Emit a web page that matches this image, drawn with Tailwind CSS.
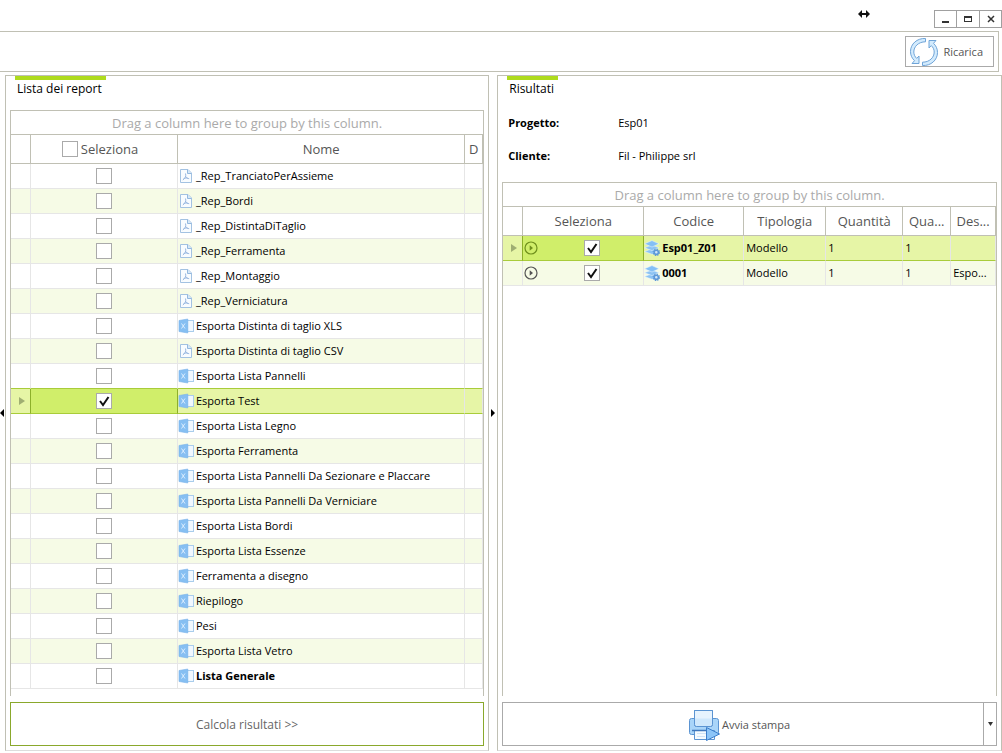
<!DOCTYPE html>
<html lang="it">
<head>
<meta charset="utf-8">
<title>Lista dei report</title>
<script src="https://cdn.jsdelivr.net/npm/@tailwindcss/browser@4"></script>
</head>
<body class="flex h-screen flex-col overflow-hidden bg-white font-['Open_Sans','Noto_Sans',sans-serif] text-[11px] leading-4 text-black">

<svg class="hidden" aria-hidden="true">
  <symbol id="pdf" viewBox="0 0 16 16">
    <path d="M2.500 1.500h7.500l3.500 3.500v9.500h-11z" fill="#f8fcff" stroke="#a3c2e2"/>
    <path d="M9.500 1.500v4h4" fill="#d5e8fa" stroke="#93b9df"/>
    <path d="M7.500 5.500c.7 2.500 0 4.500-2.700 6.500M7.800 8.500c.7 1.500 1.700 2 3.400 2.200M5.500 10.800c1.400-.7 2.800-.9 4.300-.6" fill="none" stroke="#8fb0dc" stroke-width=".9"/>
  </symbol>
  <symbol id="xls" viewBox="0 0 16 16">
    <rect x="9" y="2.500" width="6.500" height="11" fill="#f1f8ff" stroke="#a9cdec"/>
    <path d="M1 2.500 9.800 1v14L1 13.500z" fill="#86bff2" stroke="#78b2ea" stroke-width=".6"/>
    <path d="m3.500 5.500 3.500 5M7 5.500l-3.500 5" stroke="#dceeff" stroke-width="1"/>
  </symbol>
  <symbol id="layers" viewBox="0 0 16 16">
    <path d="M.5 11.500 8 8.800l7 2.700L8 14.300z" fill="#8cc3f3" stroke="#eef8ff" stroke-width=".5"/>
    <path d="M.5 7.800 8 5l7 2.800-7 2.800z" fill="#8cc3f3" stroke="#eef8ff" stroke-width=".5"/>
    <path d="M.5 3.800 8 .6l7 3.200-7 3.200z" fill="#84c0f5" stroke="#eef8ff" stroke-width=".5"/>
    <circle cx="12.300" cy="12.300" r="2.100" fill="#cfe6fb" stroke="#5c98d8" stroke-width="1.600"/>
    <circle cx="12.300" cy="12.300" r="3.200" fill="none" stroke="#5c98d8" stroke-width="1.100" stroke-dasharray="1.400 1.110"/>
  </symbol>
  <symbol id="play" viewBox="0 0 14 14">
    <circle cx="7" cy="7" r="6" fill="none" stroke="currentColor" stroke-width="1.200"/>
    <path d="M5.700 4.200v5.600L9 7z" fill="currentColor"/>
  </symbol>
</svg>

<header class="flex h-[31px] shrink-0 items-start justify-end">
  <svg class="mt-[9px] mr-16 h-2.5 w-3" viewBox="0 0 12 10" aria-hidden="true"><path d="M0 5l4-4v3h4V1l4 4-4 4V6H4v3z" fill="#111"/></svg>
  <div class="mt-[10px] flex border border-[#a0a0a0] text-[#333]">
    <button aria-label="Riduci" class="grid h-4 w-[22px] place-items-center border-r border-[#a0a0a0]"><svg class="size-3" viewBox="0 0 12 12"><path d="M2 8h7v2H2z" fill="currentColor"/></svg></button>
    <button aria-label="Ingrandisci" class="grid h-4 w-[23px] place-items-center border-r border-[#a0a0a0]"><svg class="size-3" viewBox="0 0 12 12"><path d="M2 3h8v6H2zM3 5v3h6V5z" fill="currentColor" fill-rule="evenodd"/></svg></button>
    <button aria-label="Chiudi" class="grid h-4 w-[21px] place-items-center"><svg class="size-3" viewBox="0 0 12 12"><path d="m3 3 6 6M9 3 3 9" stroke="currentColor" stroke-width="1.500"/></svg></button>
  </div>
</header>

<div class="mr-[3px] flex h-[41px] shrink-0 items-center justify-end border border-l-0 border-[#c0c0b4] pr-1">
  <button class="flex h-[31px] items-center gap-1 border border-[#aaa] pr-2.5 pl-[3px] text-[11px] text-[#555]">
    <svg class="size-[30px]" viewBox="0 0 30 30" fill="#d3ebfd" stroke="#6fa4d8" aria-hidden="true">
      <path d="M16.500 1.500C8 1 1.500 7 1.500 14.500c0 3.800 1.500 6.800 4 9.200L3 26.500h7V19l-2.300 2.400C5.900 19.700 4.800 17.500 4.800 15c0-5.500 4.700-10.200 11.700-10.200z"/>
      <path d="M13.500 28.500c8.500.5 15-5.500 15-13 0-3.800-1.500-6.800-4-9.200L27 3.500h-7V11l2.300-2.400c1.800 1.700 2.900 3.900 2.900 6.400 0 5.500-4.700 10.200-11.700 10.200z"/>
    </svg>
    Ricarica
  </button>
</div>

<main class="mt-[3px] mb-0.5 flex min-h-0 flex-1">
  <div class="grid w-[5px] shrink-0 items-center"><svg class="h-2 w-1" viewBox="0 0 4 8" aria-hidden="true"><path d="M4 0v8L0 4z"/></svg></div>

  <section class="flex min-w-0 flex-[484] flex-col border border-[#c0c0b4] border-b-[#ddd] px-1 pb-1">
    <div class="ml-[5px]"><h2 class="inline-block border-t-4 border-[#aedb1c] pt-px pr-1 pl-0.5 text-xs leading-4">Lista dei report</h2></div>
    <div class="mt-[13px] flex min-h-0 flex-1 flex-col border border-b-0 border-[#c0c0b4]">
      <p class="h-6 border-b border-[#c0c0b4] pt-0.5 text-center text-[13px] leading-5 text-[#aaa]">Drag a column here to group by this column.</p>
      <table class="w-full table-fixed border-separate border-spacing-0">
        <colgroup><col class="w-5"><col class="w-[147px]"><col><col class="w-[18px]"></colgroup>
        <thead class="text-[13px] text-[#555]">
          <tr class="h-[29px] *:border-r *:border-b *:border-[#c0c0b4] *:p-0 *:font-normal">
            <th></th>
            <th><label class="flex items-center justify-center gap-[3px] pr-2"><input type="checkbox" class="size-4 appearance-none border border-[#aaa] bg-white">Seleziona</label></th>
            <th>Nome</th>
            <th>D</th>
          </tr>
        </thead>
        <tbody id="reports"></tbody>
      </table>
    </div>
    <button class="mt-[6px] h-11 shrink-0 border border-[#8aa82c] pt-0.5 text-xs text-[#666]">Calcola risultati &gt;&gt;</button>
  </section>

  <div class="grid w-2 shrink-0 place-items-center"><svg class="h-2 w-1" viewBox="0 0 4 8" aria-hidden="true"><path d="M0 0v8l4-4z"/></svg></div>

  <section class="flex min-w-0 flex-[505] flex-col border border-[#c0c0b4] border-b-[#ddd] px-1 pb-1">
    <div class="ml-[5px]"><h2 class="inline-block border-t-4 border-[#aedb1c] pt-px pr-1 pl-0.5 text-xs leading-4">Risultati</h2></div>
    <dl class="mt-[18px] ml-[6px] grid grid-cols-[110px_1fr] gap-y-[17px]">
      <dt class="font-bold">Progetto:</dt><dd>Esp01</dd>
      <dt class="font-bold">Cliente:</dt><dd>Fil - Philippe srl</dd>
    </dl>
    <div class="mt-[18px] flex min-h-0 flex-1 flex-col border border-b-0 border-[#c0c0b4]">
      <p class="h-6 border-b border-[#c0c0b4] pt-0.5 text-center text-[13px] leading-5 text-[#aaa]">Drag a column here to group by this column.</p>
      <table class="w-full table-fixed border-separate border-spacing-0">
        <colgroup><col class="w-5"><col class="w-[121px]"><col class="w-[100px]"><col class="w-[82px]"><col class="w-[77px]"><col class="w-12"><col></colgroup>
        <thead class="text-[13px] text-[#555]">
          <tr class="h-[29px] *:border-r *:border-b *:border-[#c0c0b4] *:p-0 *:font-normal">
            <th></th><th>Seleziona</th><th>Codice</th><th>Tipologia</th><th>Quantità</th><th>Qua...</th><th>Des...</th>
          </tr>
        </thead>
        <tbody id="results"></tbody>
      </table>
    </div>
    <div class="mt-[6px] flex h-11 shrink-0 border border-[#aaa] text-[11px] text-[#555]">
      <button class="flex flex-1 items-center justify-center gap-0.5 pt-0.5 pr-2">
        <svg class="size-8" viewBox="0 0 32 32" stroke="#5b94d2" aria-hidden="true">
          <rect x="1.500" y="9.500" width="29" height="16" rx="2" fill="#a9d5f9"/>
          <path d="M6.500 1.500h18v14a2 2 0 0 1-2 2h-14a2 2 0 0 1-2-2z" fill="#e6f3fe"/>
          <path d="M6.500 9.500h18v6a2 2 0 0 1-2 2h-14a2 2 0 0 1-2-2z" fill="#cfe8fc" stroke="none"/>
          <path d="M6.500 1.500h18v14a2 2 0 0 1-2 2h-14a2 2 0 0 1-2-2z" fill="none"/>
          <path d="M6.500 21.500h20v9h-20z" fill="#f5fbff"/>
          <path d="M4 21.500h18" stroke="#3f78bd" stroke-width="1.500"/>
          <path d="M9 24.500h9M9 27.500h8" stroke="#cfe4f7"/>
          <path d="M18.500 18.500v13l13-6.500z" fill="#8cc5f8" stroke="#3d7fcb"/>
        </svg>
        Avvia stampa
      </button>
      <button aria-label="Opzioni di stampa" class="grid w-[13px] place-items-center border-l border-[#aaa]"><svg class="h-1 w-[5px]" viewBox="0 0 5 4"><path d="M0 0h5L2.500 4z" fill="#333"/></svg></button>
    </div>
  </section>
</main>

<script>
const checkbox = (label, checked, place) => `
  <span class="relative grid size-4 ${place}">
    <input type="checkbox" aria-label="${label}" ${checked ? 'checked' : ''} class="peer size-4 appearance-none border border-[#aaa] bg-white">
    <svg class="pointer-events-none absolute inset-0 hidden size-4 peer-checked:block" viewBox="0 0 16 16"><path d="M4 8l3 4 5.500-8" fill="none" stroke="#111" stroke-width="2"/></svg>
  </span>`;
const marker = `<svg class="ml-2 h-2 w-1.5" viewBox="0 0 6 8"><path d="M0 0v8l6-4z" fill="#9fae72"/></svg>`;

const reports = [
  ['pdf', '_Rep_TranciatoPerAssieme'], ['pdf', '_Rep_Bordi'], ['pdf', '_Rep_DistintaDiTaglio'],
  ['pdf', '_Rep_Ferramenta'], ['pdf', '_Rep_Montaggio'], ['pdf', '_Rep_Verniciatura'],
  ['xls', 'Esporta Distinta di taglio XLS'], ['pdf', 'Esporta Distinta di taglio CSV'],
  ['xls', 'Esporta Lista Pannelli'], ['xls', 'Esporta Test'], ['xls', 'Esporta Lista Legno'],
  ['xls', 'Esporta Ferramenta'], ['xls', 'Esporta Lista Pannelli Da Sezionare e Placcare'],
  ['xls', 'Esporta Lista Pannelli Da Verniciare'], ['xls', 'Esporta Lista Bordi'],
  ['xls', 'Esporta Lista Essenze'], ['xls', 'Ferramenta a disegno'], ['xls', 'Riepilogo'],
  ['xls', 'Pesi'], ['xls', 'Esporta Lista Vetro'], ['xls', 'Lista Generale'],
];
const selected = 9;
document.getElementById('reports').innerHTML = reports.map(([icon, name], i) => {
  const on = i === selected;
  const fill = on ? 'bg-[#e6f5a6]' : i % 2 ? 'bg-[#f6fbe6]' : 'bg-white';
  const line = on || i === selected - 1 ? '*:border-b-[#a9cc3a]' : '*:border-b-[#e6e6e6]';
  const side = on ? '*:nth-[-n+2]:border-r-[#8db02a] *:nth-[n+3]:border-r-[#e6e6e6]' : '*:border-r-[#e6e6e6]';
  return `<tr class="h-[25px] ${fill} ${line} ${side} *:border-r *:border-b *:p-0">
    <td>${on ? marker : ''}</td>
    <td class="${on ? 'bg-[#d0ee6a]' : ''}">${checkbox(name, on, 'mx-auto')}</td>
    <td><span class="flex items-center gap-0.5 ${i === reports.length - 1 ? 'font-bold' : ''}"><svg class="h-4 w-4 shrink-0"><use href="#${icon}"/></svg>${name}</span></td>
    <td></td>
  </tr>`;
}).join('');

const results = [['Esp01_Z01', 'Modello', 1, 1, ''], ['0001', 'Modello', 1, 1, 'Espo...']];
document.getElementById('results').innerHTML = results.map(([code, type, a, b, desc], i) => {
  const on = i === 0;
  const side = on ? '*:nth-[-n+2]:border-r-[#8db02a] *:nth-[n+3]:border-r-[#e6e6e6]' : '*:border-r-[#e6e6e6]';
  return `<tr class="h-[25px] ${on ? 'bg-[#e6f5a6] *:border-b-[#a9cc3a]' : 'bg-[#f6fbe6] *:border-b-[#e6e6e6]'} ${side} *:border-r *:border-b *:p-0">
    <td>${on ? marker : ''}</td>
    <td class="${on ? 'bg-[#d0ee6a] text-[#6f8f1c]' : 'text-[#555]'}"><span class="flex items-center pl-px"><svg class="size-3.5"><use href="#play"/></svg>${checkbox(code, true, 'ml-[46px]')}</span></td>
    <td><span class="flex items-center gap-0.5 font-bold"><svg class="size-4 shrink-0"><use href="#layers"/></svg>${code}</span></td>
    <td><span class="pl-0.5">${type}</span></td>
    <td><span class="pl-0.5">${a}</span></td>
    <td><span class="pl-0.5">${b}</span></td>
    <td><span class="pl-0.5">${desc}</span></td>
  </tr>`;
}).join('');
</script>
</body>
</html>
